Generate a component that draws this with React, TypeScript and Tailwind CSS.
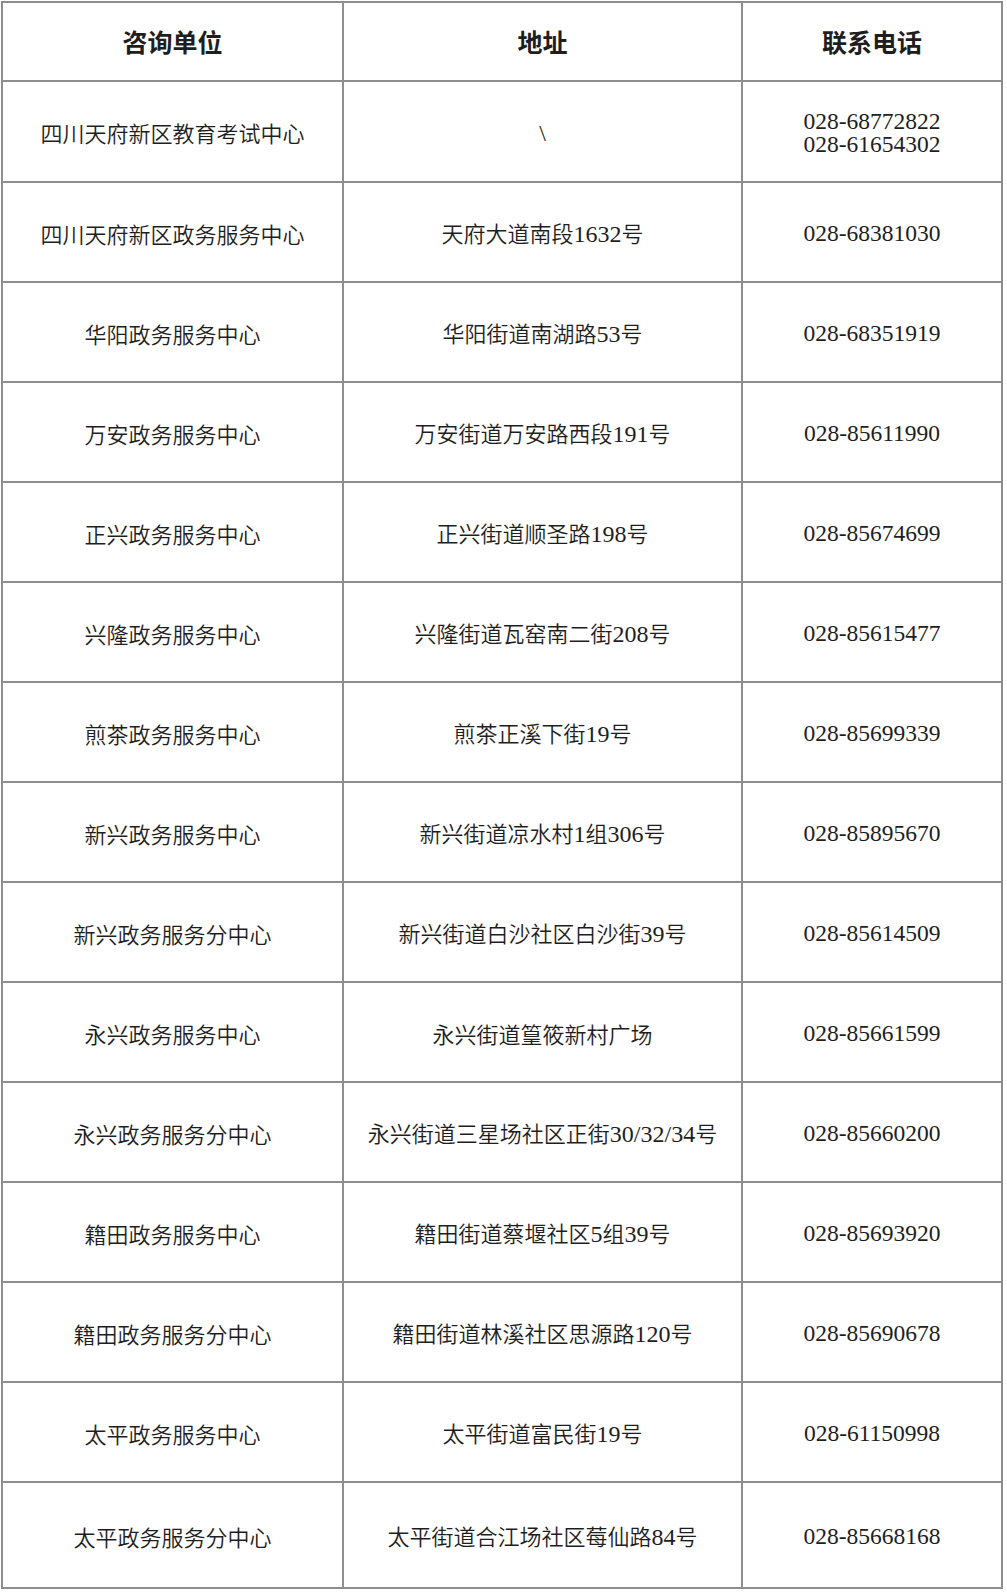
import React from "react";

type Row = { unit: string; addr: string; phone: string[] };

const rows: Row[] = [
  { unit: "四川天府新区教育考试中心", addr: "\\", phone: ["028-68772822", "028-61654302"] },
  { unit: "四川天府新区政务服务中心", addr: "天府大道南段1632号", phone: ["028-68381030"] },
  { unit: "华阳政务服务中心", addr: "华阳街道南湖路53号", phone: ["028-68351919"] },
  { unit: "万安政务服务中心", addr: "万安街道万安路西段191号", phone: ["028-85611990"] },
  { unit: "正兴政务服务中心", addr: "正兴街道顺圣路198号", phone: ["028-85674699"] },
  { unit: "兴隆政务服务中心", addr: "兴隆街道瓦窑南二街208号", phone: ["028-85615477"] },
  { unit: "煎茶政务服务中心", addr: "煎茶正溪下街19号", phone: ["028-85699339"] },
  { unit: "新兴政务服务中心", addr: "新兴街道凉水村1组306号", phone: ["028-85895670"] },
  { unit: "新兴政务服务分中心", addr: "新兴街道白沙社区白沙街39号", phone: ["028-85614509"] },
  { unit: "永兴政务服务中心", addr: "永兴街道篁筱新村广场", phone: ["028-85661599"] },
  { unit: "永兴政务服务分中心", addr: "永兴街道三星场社区正街30/32/34号", phone: ["028-85660200"] },
  { unit: "籍田政务服务中心", addr: "籍田街道蔡堰社区5组39号", phone: ["028-85693920"] },
  { unit: "籍田政务服务分中心", addr: "籍田街道林溪社区思源路120号", phone: ["028-85690678"] },
  { unit: "太平政务服务中心", addr: "太平街道富民街19号", phone: ["028-61150998"] },
  { unit: "太平政务服务分中心", addr: "太平街道合江场社区莓仙路84号", phone: ["028-85668168"] },
];

function Mixed({ text }: { text: string }) {
  const parts = text.match(/[\u3000-\u9fff]+|[^\u3000-\u9fff]+/g) || [];
  return (
    <>
      {parts.map((p, i) =>
        /[\u3000-\u9fff]/.test(p) ? (
          <span key={i} className="font-['Noto_Sans_CJK_SC',sans-serif] font-[350]">{p}</span>
        ) : (
          <span key={i} className="font-['Liberation_Serif',serif] font-normal text-[24px]">{p}</span>
        )
      )}
    </>
  );
}

const cell =
  "flex flex-col items-center justify-center text-center border-r-2 border-b-2 border-[#8e8e8e] text-[#1e1e1e]";

export default function App() {
  return (
    <div className="bg-white w-[1007px] h-[1594px] pt-[1px] pl-[1px]">
      <div className="grid grid-cols-[341px_399px_260px] w-[1002px] border-l-2 border-t-2 border-[#8e8e8e]">
        <div className={`${cell} h-[79px] text-[25px] font-bold font-['Noto_Sans_CJK_SC',sans-serif] pt-[1px]`}>咨询单位</div>
        <div className={`${cell} h-[79px] text-[25px] font-bold font-['Noto_Sans_CJK_SC',sans-serif] pt-[1px]`}>地址</div>
        <div className={`${cell} h-[79px] text-[25px] font-bold font-['Noto_Sans_CJK_SC',sans-serif] pt-[1px]`}>联系电话</div>
        {rows.map((r, i) => {
          const h = i === 0 ? "h-[101px]" : i === rows.length - 1 ? "h-[106px]" : "h-[100px]";
          return (
            <React.Fragment key={i}>
              <div className={`${cell} ${h} pt-[2px] text-[22px] font-[350] font-['Noto_Sans_CJK_SC',sans-serif]`}>{r.unit}</div>
              <div className={`${cell} ${h} pt-[2px] text-[22px] leading-[30px]`}>
                <div className="leading-[30px]"><Mixed text={r.addr} /></div>
              </div>
              <div className={`${cell} ${h} pt-[3px] text-[23.5px] leading-[23px] font-['Liberation_Serif',serif]`}>
                {r.phone.map((p, j) => (
                  <div key={j}>{p}</div>
                ))}
              </div>
            </React.Fragment>
          );
        })}
      </div>
    </div>
  );
}
